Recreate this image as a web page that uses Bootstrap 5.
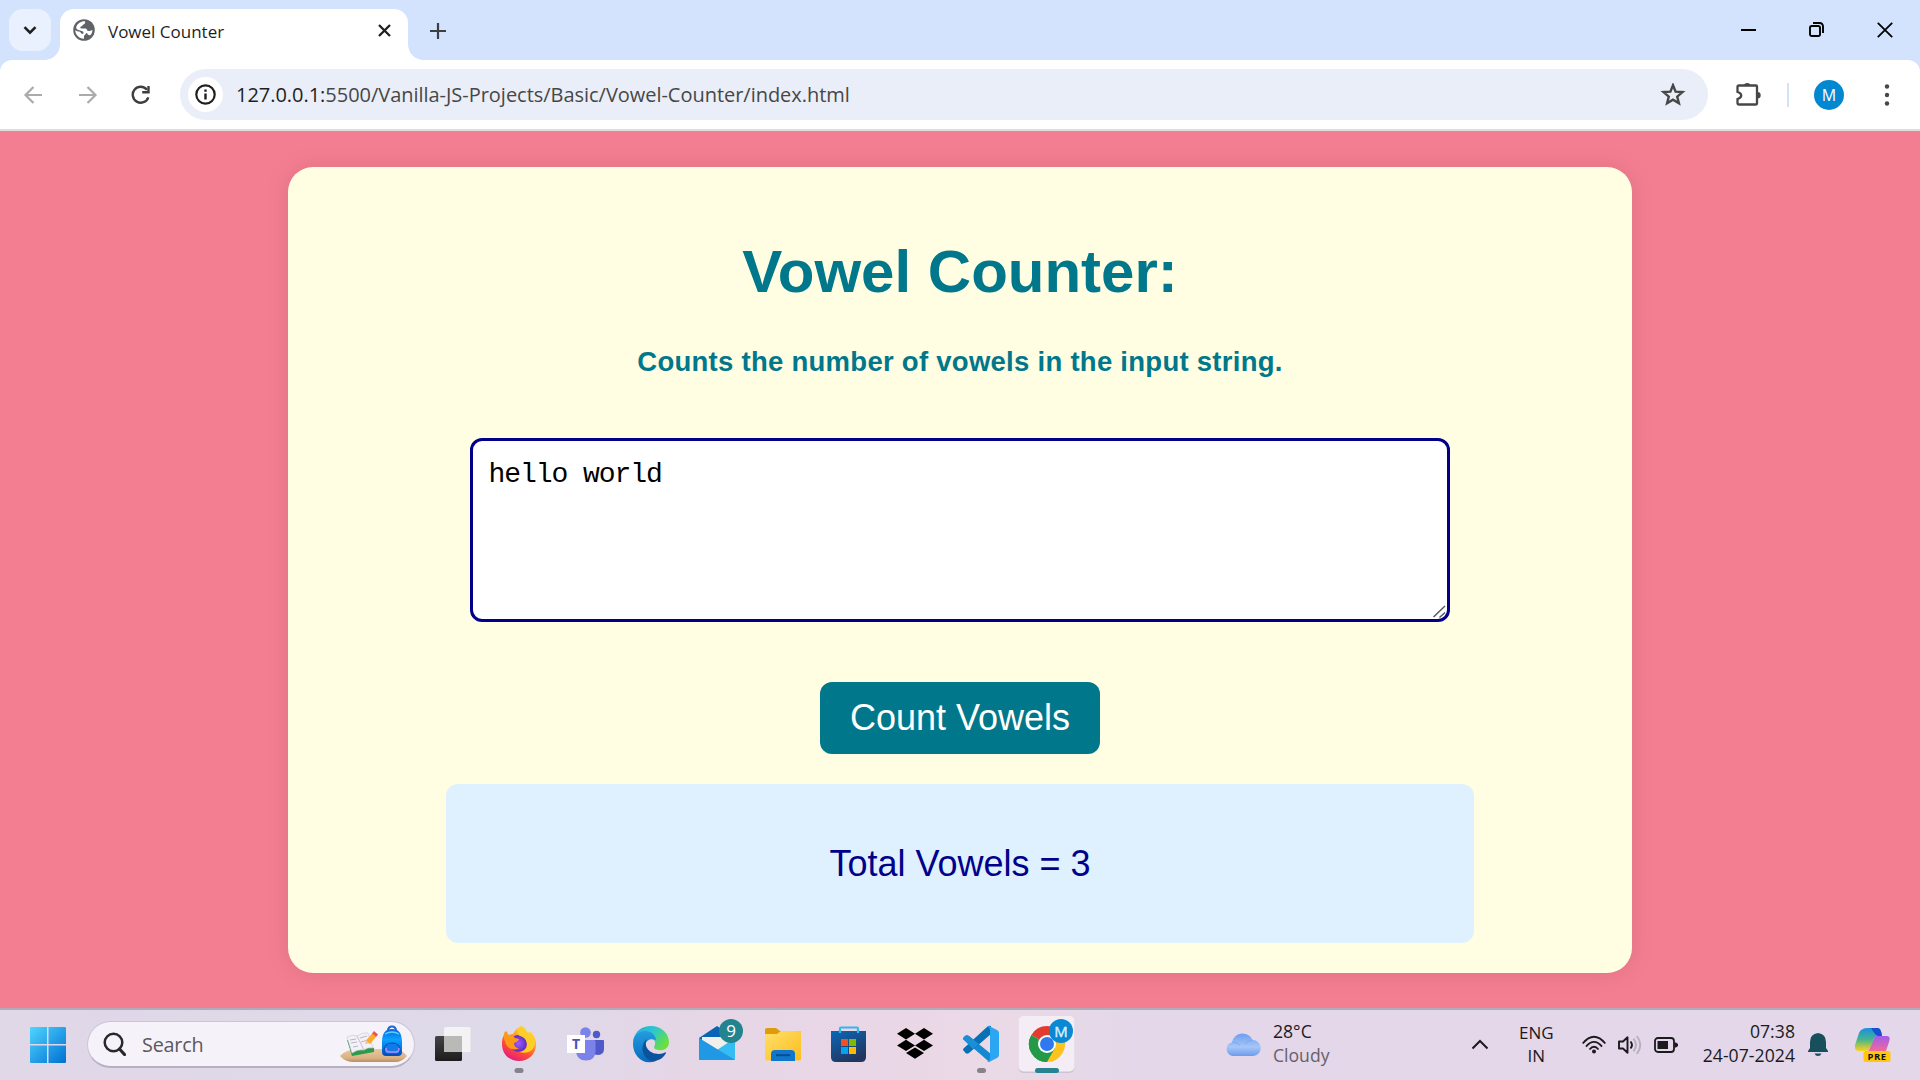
<!DOCTYPE html>
<html lang="en">
<head>
<meta charset="utf-8">
<meta name="viewport" content="width=device-width, initial-scale=1">
<title>Vowel Counter</title>
<link href="https://cdn.jsdelivr.net/npm/bootstrap@5.3.0/dist/css/bootstrap.min.css" rel="stylesheet">
<style>
  body { width: 1920px; height: 1080px; font-family: "Open Sans", "Noto Sans", sans-serif; color: #1f1f1f; }
  svg { display: block; flex: none; }

  /* browser chrome */
  .tabstrip { height: 60px; background: #d3e3fd; padding: 9px 0 0 9px; }
  .tab-search { width: 42px; height: 42px; border-radius: 14px; background: #eaf1fe; }
  .page-tab { width: 348px; height: 51px; margin-left: 9px; border-radius: 14px 14px 0 0; background: #fff; padding: 0 17px 9px 13px; position: relative; }
  .page-tab::before, .page-tab::after { content: ""; position: absolute; bottom: 0; width: 15px; height: 15px; }
  .page-tab::before { left: -15px; background: radial-gradient(circle at 0 0, transparent 14.5px, #fff 15px); }
  .page-tab::after { right: -15px; background: radial-gradient(circle at 100% 0, transparent 14.5px, #fff 15px); }
  .tab-title { font-size: 17px; margin-left: 13px; padding-top: 3px; line-height: 38px; }
  .win-buttons { gap: 53px; padding: 0 27px 10px 0; }
  .toolbar-wrap { height: 69px; background: #d3e3fd; }
  .toolbar { height: 69px; background: #fff; border-radius: 12px 12px 0 0; padding: 0 28px 0 22px; }
  .nav-icons { gap: 30.500px; }
  .omnibox { width: 1528px; height: 51px; margin-left: 29px; border-radius: 26px; background: #eaeef8; padding: 0 22px 0 8px; }
  .site-info { width: 35px; height: 35px; border-radius: 50%; background: #fff; }
  .url { font-size: 20px; letter-spacing: -.03px; margin-left: 13px; color: #474747; }
  .url b { font-weight: 400; color: #1f1f1f; }
  .avatar { width: 30px; height: 30px; border-radius: 50%; background: #0288d1; color: #fff; font-size: 16px; }
  .bar-sep { width: 2px; height: 24px; margin: 0 25px 0 26px; background: #d3e3fd; }
  .kebab { margin-left: 38px; }

  /* page */
  .stage { height: 879px; background: #f47e91; border-top: 2px solid #dedede; padding-top: 36px; font-family: "Liberation Sans", Arial, sans-serif; }
  .counter-panel { width: 1344px; height: 806px; border-radius: 25px; background: #fffee3; box-shadow: 0 0 25px rgba(0,0,0,.1); padding-top: 70px; }
  .counter-title { font-size: 60px; line-height: 69px; font-weight: 700; color: #00778b; }
  .counter-sub { font-size: 27.5px; line-height: 32px; font-weight: 700; color: #00778b; margin-top: 40px; letter-spacing: .27px; }
  .input-wrap { margin-top: 60px; }
  .vowel-input { display: block; width: 980px; height: 184px; border: 3px solid #00008b; border-radius: 12px; padding: 19px 16px 13px 15.500px; font-family: "Liberation Mono", monospace; font-size: 28px; letter-spacing: -1.05px; line-height: 30px; color: #000; resize: none; background: #fff; outline: 0; }
  .grip { position: absolute; right: 4px; bottom: 4px; }
  .count-btn { width: 280px; height: 72px; margin-top: 60px; border-radius: 12px; background: #00778b; color: #fff; font-size: 36px; border: 0; padding: 0; }
  .count-btn:hover { background: #00667a; color: #fff; }
  .result-box { width: 1028px; height: 159px; margin-top: 30px; border-radius: 12px; background: #dff0ff; color: #00008b; font-size: 36px; }

  /* taskbar */
  .taskbar { height: 72px; border-top: 2px solid #b0aab9; background: linear-gradient(90deg, #e0d7e7 0, #dfd9e8 20%, #dddae9 27%, #e5d6e6 35%, #ead7e6 47%, #eadae6 52%, #e3d7e9 59%, #e3d7e9 100%); padding-left: 30px; padding-right: 29px; }
  .search-pill { width: 328px; height: 47px; margin: 0 4px 2px 21px; border: 1.5px solid #cbc5d5; border-bottom: 2px solid #b6b0c1; border-radius: 24px; background: #f5f3f9; padding: 0 6px 0 15px; }
  .search-pill span { font-size: 19.8px; color: #5b5860; margin-left: 16px; padding-top: 2px; letter-spacing: -.2px; }
  .tray-text { font-size: 17.6px; line-height: 24px; color: #1b1a1d; padding-bottom: 4px; }
  .weather { margin-left: 146px; gap: 12px; }
  .dim { color: #65616a; }
  .tray { gap: 12px; }
  .lang { font-size: 17px; line-height: 23px; padding-bottom: 3px; margin: 0 16px 0 18px; }
  .clock { margin-left: 13px; letter-spacing: .05px; }
  .copilot { margin-left: 14px; }
</style>
<script src="https://cdn.jsdelivr.net/npm/bootstrap@5.3.0/dist/js/bootstrap.bundle.min.js"></script>
</head>
<body class="m-0 overflow-hidden d-flex flex-column">

<header>
  <div class="tabstrip d-flex">
    <div class="tab-search d-flex align-items-center justify-content-center">
      <svg width="14" height="9" viewBox="0 0 14 9" fill="none" stroke="#1f1f1f" stroke-width="2.6"><path d="M1.5 1.2 7 6.7l5.500-5.500"/></svg>
    </div>
    <div class="page-tab d-flex align-items-center">
      <svg width="22" height="22" viewBox="0 0 22 22"><circle cx="11" cy="11" r="10.800" fill="#5f6368"/><path d="M12 2.300c.6 1.800-.3 2.700-1.500 3.200-1.200.4-.9 1.800-2.500 2.100-1.200.3-.9 1.700.1 1.900h4.200c1.500.1 1.900 1.100 2 2.200l1.700.4c1.200.2 1.400-1.200 3.500-.7-.2 1.700-1 3.400-2 4.700-1.600.6-2.700-.2-3.200-1.500-.2-.8-1.300-.7-1.600.1-.4 1.300-1.600 1.200-1.700 2.500v2.500C6 19.500 2.300 15.600 2.300 11.200c1.300 1 2.800 1.200 4 1.400 1.700.2 1.400 2.200 2.900 2.300 1.700 0 1.700-1.500.7-2.300-1-.7-2.300-1-3.700-1.300C3.900 11 3 9.500 3.200 8 4.500 4.400 8 2.100 12 2.300z" fill="#fff"/></svg>
      <span class="tab-title flex-grow-1">Vowel Counter</span>
      <svg width="13" height="13" viewBox="0 0 13 13" stroke="#1f1f1f" stroke-width="2.300"><path d="M1 1l11 11M12 1 1 12"/></svg>
    </div>
    <svg class="ms-3 mt-2" width="30" height="30" viewBox="-7 -7 30 30" stroke="#3c4043" stroke-width="2.200"><path d="M7-1v16M-1 7h16"/></svg>
    <div class="win-buttons ms-auto d-flex align-items-center">
      <svg width="15" height="16" stroke="#000" stroke-width="2"><path d="M0 8h15"/></svg>
      <svg width="15" height="15" viewBox="0 0 15 15" fill="none" stroke="#000" stroke-width="1.900"><rect x="1" y="4" width="10" height="10" rx="1.800"/><path d="M4 1h6.500q3.500 0 3.500 3.500V11"/></svg>
      <svg width="16" height="16" viewBox="0 0 16 16" stroke="#000" stroke-width="1.800"><path d="M.8.800l14.400 14.400M15.200.8.800 15.200"/></svg>
    </div>
  </div>
  <div class="toolbar-wrap">
    <div class="toolbar d-flex align-items-center">
      <div class="nav-icons d-flex align-items-center">
        <svg width="22" height="22" viewBox="0 0 22 22" fill="none" stroke="#ababab" stroke-width="2.200"><path d="M20 11H4M11.500 3 3.500 11l8 8"/></svg>
        <svg width="22" height="22" viewBox="1 0 22 22" fill="none" stroke="#ababab" stroke-width="2.200" class="ms-1"><path d="M1 11h16M9.500 3l8 8-8 8"/></svg>
        <svg width="20" height="20" viewBox="0 0 20 20" fill="none" stroke="#3c4043" stroke-width="2.400"><path d="M17.300 12.300A8 8 0 1 1 16 4.700"/><path d="M17.500 1V7.300H11.200" /></svg>
      </div>
      <div class="omnibox d-flex align-items-center">
        <div class="site-info d-flex align-items-center justify-content-center">
          <svg width="21" height="21" viewBox="0 0 21 21"><circle cx="10.500" cy="10.500" r="9.200" fill="none" stroke="#1f1f1f" stroke-width="2.200"/><path d="M9.300 9.500h2.400v6H9.300zM9.300 5.500h2.400v2.300H9.300z" fill="#1f1f1f"/></svg>
        </div>
        <span class="url flex-grow-1"><b>127.0.0.1:</b>5500/Vanilla-JS-Projects/Basic/Vowel-Counter/index.html</span>
        <svg width="26" height="24" viewBox="0 1 26 24" fill="none" stroke="#474747" stroke-width="2.400"><path d="M13 3.200l2.600 6.400 6.900.5-5.300 4.500 1.700 6.700L13 17.700l-5.900 3.600 1.700-6.700-5.300-4.500 6.900-.5z"/></svg>
      </div>
      <svg class="ms-auto" width="25" height="24" viewBox="0 1 25 24"><path d="M3 3.500h17q1 0 1 1v17q0 1-1 1H3q-1.500 0-1.500-1.500v-4c5-1.500 5-5.500 0-7v-5q0-1.500 1.500-1.500z" fill="none" stroke="#474747" stroke-width="2.300"/><path d="M8 3.500a3.200 2.500 0 0 1 6.400 0zM21.500 10a3.200 3.200 0 0 1 0 6.400z" fill="#474747"/></svg>
      <div class="bar-sep"></div>
      <div class="avatar d-flex align-items-center justify-content-center">M</div>
      <svg class="kebab" width="10" height="24" viewBox="0 0 10 24" fill="#474747"><circle cx="5" cy="3.500" r="2.200"/><circle cx="5" cy="12" r="2.200"/><circle cx="5" cy="20.500" r="2.200"/></svg>
    </div>
  </div>
</header>

<main class="stage">
  <section class="counter-panel mx-auto d-flex flex-column align-items-center">
    <h1 class="counter-title mb-0">Vowel Counter:</h1>
    <p class="counter-sub mb-0">Counts the number of vowels in the input string.</p>
    <div class="input-wrap position-relative">
      <textarea class="vowel-input" spellcheck="false">hello world</textarea>
      <svg class="grip" width="14" height="14" viewBox="0 0 14 14" stroke="#5a5a5a" stroke-width="1.500"><path d="M1.500 13 13 2M7.500 13.500 13 8.500"/></svg>
    </div>
    <button type="button" class="btn count-btn">Count Vowels</button>
    <div class="result-box d-flex align-items-center justify-content-center">Total Vowels = 3</div>
  </section>
</main>

<footer class="taskbar d-flex align-items-center">
  <svg width="36" height="36" viewBox="0 0 35 35"><defs><linearGradient id="win" x1="0" y1="0" x2="1" y2="1" ><stop offset="0" stop-color="#4fd5ff"/><stop offset="1" stop-color="#0070d3"/></linearGradient></defs><path d="M1 0h15.500v16.500H0V1q0-1 1-1zM18 0h16q1 0 1 1v15.500H18zM0 18h16.500v17H1q-1 0-1-1zM18 18h17v16q0 1-1 1H18z" fill="url(#win)"/></svg>

  <div class="search-pill d-flex align-items-center">
    <svg width="23" height="24" viewBox="0 0 23 24" fill="none" stroke="#2a282b" stroke-width="2.500"><circle cx="10.500" cy="10.500" r="8.800"/><path d="M16.500 17 21.500 22.500" stroke-width="3.200" stroke-linecap="round"/></svg>
    <span class="flex-grow-1">Search</span>
    <svg width="68" height="40" viewBox="0 0 68 40">
      <defs><linearGradient id="sand" x2="0" y2="1"><stop stop-color="#e8c79c"/><stop offset=".7" stop-color="#d9b283"/><stop offset="1" stop-color="#b98b60"/></linearGradient>
      <linearGradient id="pack" x2="0" y2="1"><stop stop-color="#0c63dc"/><stop offset=".4" stop-color="#0aa2ff"/><stop offset="1" stop-color="#0549bd"/></linearGradient></defs>
      <path d="M0 32q6-7 20-7h30q14 1 17 7-5 6-12 6H14Q5 38 0 32z" fill="url(#sand)"/>
      <path d="M7 16l5 16 22-4 0-4z" fill="#2c9a4b"/><path d="M7 13q6-3 10-1 6-4 11-3l5 15q-5-1-9 2-6-1-12 3z" fill="#f3f1f7" stroke="#c9c5d3" stroke-width=".6"/><path d="M17 12l7 14" stroke="#c4bfd0" stroke-width="1"/><path d="M10 16l6-1m-5 4 6-1m-4 5 5-1m2-8 7-2m-6 6 7-2" stroke="#b3afc2" stroke-width=".9"/>
      <path d="M25 20l2-5 5 4z" fill="#eec48a"/><path d="M26.500 16 32 9.500l4 3.500-6 7z" fill="#f9ac2e"/><path d="M32 9.500l2-2.500 4 3.500-2 2.500z" fill="#ef5351"/>
      <path d="M48 7q0-4.500 4-4.500T56 7" fill="none" stroke="#1c67d8" stroke-width="2"/><path d="M42 18Q42 5 52 5t10 13v10q0 4-4 4H46q-4 0-4-4z" fill="url(#pack)"/><path d="M45 10q7-4 14 0" fill="none" stroke="#5ad5ff" stroke-width="1.300"/><path d="M44 27q0-8 8-8t8 8q0 3-3 3H47q-3 0-3-3z" fill="#127be9" stroke="#054ab9"/><path d="M46 24q0 4 3 4h7q3 0 3-4" fill="none" stroke="#b28cff" stroke-width="1.500"/>
    </svg>
  </div>

  <!-- pinned and running apps, one 66px slot each -->
  <div class="d-flex" id="apps">
    <svg width="66" height="70" viewBox="0 0 66 70"><defs><linearGradient id="tv" x2="0" y2="1"><stop stop-color="#444"/><stop offset="1" stop-color="#1c1c1c"/></linearGradient></defs><rect x="16" y="26" width="27" height="25" rx="1.500" fill="url(#tv)"/><rect x="25" y="17" width="26.500" height="25" rx="1.500" fill="#f3f3f4"/><path d="M25 26h18v16H25z" fill="#b9b9b8"/></svg>

    <svg width="66" height="70" viewBox="0 0 66 70"><defs><linearGradient id="fx" x1=".8" y1="0" x2=".25" y2="1"><stop stop-color="#fff44f"/><stop offset=".35" stop-color="#ffa22a"/><stop offset=".65" stop-color="#ff5030"/><stop offset="1" stop-color="#e31587"/></linearGradient><radialGradient id="fxp"><stop stop-color="#a05bff"/><stop offset="1" stop-color="#5b2bc2"/></radialGradient></defs><path d="M36 16q4 3 5 8 3 0 4-3c4 4 6 8 6 13 0 10-7 17-17 17S17 44 17 34c0-6 2-10 5-13l1 4 5-1q3-6 8-8z" fill="url(#fx)"/><circle cx="33.500" cy="33.500" r="8.500" fill="url(#fxp)"/><path d="M20 21l3 4c4-1 5 1 7 3l4 1c-1 3-3 3-5 4 0 3 2 5 5 5-6 4-13 0-14-7-2-4-1-7 0-10z" fill="#ff9a16"/><path d="M36 16c-4 4-4 9-1 10 4 1 7 4 7 9 0 4-4 7-8 7 10 3 17-3 16-11-1-7-5-8-8-9q-2-5-6-6z" fill="#ffcd28"/><rect x="29.500" y="58" width="9" height="5" rx="2.500" fill="#87818c"/></svg>

    <svg width="66" height="70" viewBox="0 0 66 70"><circle cx="34.500" cy="22.500" r="5.300" fill="#7b83eb"/><circle cx="45.500" cy="24.500" r="3.700" fill="#5059c9"/><path d="M43 30h9q1 0 1 1v8q0 6-7 6-3 0-6-3z" fill="#5059c9"/><path d="M25 30h18q1.500 0 1.500 1.500V41q0 9.500-9.500 9.500T25 41z" fill="#7b83eb"/><rect x="16" y="25" width="18" height="18" fill="#fff"/><text x="25" y="39" font-size="14" font-weight="700" fill="#4b53bc" text-anchor="middle">T</text></svg>

    <svg width="66" height="70" viewBox="0 0 66 70"><defs><linearGradient id="e1" x2="1" y2=".6"><stop stop-color="#1fa9ef"/><stop offset=".55" stop-color="#31c9c3"/><stop offset="1" stop-color="#6be03d"/></linearGradient><linearGradient id="e2" x2="0" y2="1"><stop stop-color="#249de0"/><stop offset="1" stop-color="#0869bd"/></linearGradient></defs><path d="M16 31C18 21 25 16 34 16c10 0 18 7 18 16 0 6-5 9-10 8-3 0-5-1-5-3 5-8-6-14-21-6z" fill="url(#e1)"/><path d="M16 34c0-9 6-13 12-13 7 0 11 5 11 9-6-2-10 0-11 6-1 8 4 14 11 15-13 5-23-5-23-17z" fill="url(#e2)"/><path d="M30 29c-7 5-6 18 4 22 8 1 13-4 15-8 0-1-1-1-2 0-6 2-13 1-17-5-2-4-1-7 0-9z" fill="#0c539d"/></svg>

    <svg width="66" height="70" viewBox="0 0 66 70"><path d="M16 28 34 16l18 12v8H16z" fill="#0b63b6"/><path d="M19 27h30v12L34 44 19 36z" fill="#f1efec"/><path d="M16 28l18 12L52 28v21q0 1-1 1H17q-1 0-1-1z" fill="#35bdf3"/><path d="M16 28l36 22H17q-1 0-1-1z" fill="#2098e4"/><circle cx="48" cy="21" r="12" fill="#23838f"/><text x="48" y="27" font-size="17" fill="#fff" text-anchor="middle">9</text></svg>

    <svg width="66" height="70" viewBox="0 0 66 70"><defs><linearGradient id="fo" x2="1" y2="1"><stop stop-color="#ffdf69"/><stop offset="1" stop-color="#fcbd1f"/></linearGradient></defs><path d="M16 20q0-2 2-2h9l4 3h19q2 0 2 2v8H16z" fill="#dc9c0b"/><path d="M16 24h12l4-3h18q2 0 2 2v26q0 1.500-1.500 1.500h-33Q16 50.500 16 49z" fill="url(#fo)"/><path d="M22 51v-7q0-4 4-4h16q4 0 4 4v7z" fill="#0f77cb"/><path d="M27 45.200h14" stroke="#064b91" stroke-width="2"/></svg>

    <svg width="66" height="70" viewBox="0 0 66 70"><defs><linearGradient id="st" x2=".5" y2="1"><stop stop-color="#0c67b8"/><stop offset="1" stop-color="#21365f"/></linearGradient></defs><path d="M25 24v-5.500q0-1 1-1h16q1 0 1 1V24" fill="none" stroke="#35b6ee" stroke-width="2.200"/><path d="M16 21h35v26q0 5-5 5H21q-5 0-5-5z" fill="url(#st)"/><path d="M25 23v-3m18 3v-3" stroke="#35b6ee" stroke-width="2.200"/><path d="M26 29h7v7h-7z" fill="#f25022"/><path d="M34 29h7v7h-7z" fill="#7fba00"/><path d="M26 37h7v7h-7z" fill="#00a4ef"/><path d="M34 37h7v7h-7z" fill="#ffb900"/></svg>

    <svg width="66" height="70" viewBox="0 0 66 70"><path d="M25 18l9 5.700-9 5.700-9-5.700zM43 18l9 5.700-9 5.700-9-5.700zM25 29.700l9 5.700-9 5.700-9-5.700zM43 29.700l9 5.700-9 5.700-9-5.700zM34 37.500l9 5.600-9 5.600-9-5.600z"/></svg>

    <svg width="66" height="70" viewBox="0 0 66 70"><path d="M17 27q2-3 5-1l22 18v7q-2 1-4-1L17 30q-2-1 0-3z" fill="#1488d0"/><path d="M17 41q-2-1 0-3l23-21q2-2 4-1v8L22 43q-3 2-5-2z" fill="#0870b5"/><path d="M17 27q2-3 5-1l10 8-6 5-9-9q-2-1 0-3z" fill="#1a8fd5"/><path d="M42 16l8 4q2 1 2 3v22q0 2-2 3l-8 4q-1 0-2-1 3 0 3-3V20q0-3-3-3 1-1 2-1z" fill="#2aa6f2"/><rect x="30" y="58" width="9" height="5" rx="2.500" fill="#87818c"/></svg>

    <svg width="66" height="70" viewBox="0 0 66 70"><rect x="5.500" y="7" width="56" height="56" rx="5" fill="#cdc3d2"/><rect x="5.500" y="6" width="56" height="55.500" rx="5" fill="#f4edf5"/><path d="M34 34 18.400 25A18 18 0 0 1 49.600 25z" fill="#e33b2e"/><path d="M34 34 18.400 25A18 18 0 0 0 34 52z" fill="#249a49"/><path d="M34 34h-8L34 52A18 18 0 0 0 49.600 25H34z" fill="#fcc31e"/><path d="M24 31 18.400 25A18 18 0 0 0 34 52l8-14-8 4z" fill="#249a49"/><circle cx="34" cy="34" r="9" fill="#fff"/><circle cx="34" cy="34" r="7" fill="#2e79ee"/><circle cx="48" cy="21" r="12" fill="#0989d3"/><text x="48" y="26.500" font-size="15" fill="#d9f0ff" stroke="#d9f0ff" stroke-width=".4" text-anchor="middle">M</text><rect x="22" y="58" width="24" height="5" rx="2.500" fill="#27838f"/></svg>
  </div>

  <div class="weather d-flex align-items-center">
    <svg width="36" height="24" viewBox="0 0 36 24"><defs><linearGradient id="cl" x2="0" y2="1"><stop stop-color="#6d9ef0"/><stop offset=".6" stop-color="#a5c7f8"/><stop offset="1" stop-color="#6d9beb"/></linearGradient></defs><path d="M8 23a7 7 0 0 1-1-13.800Q9 1 17 0.500 25 .5 27.500 7A8 8 0 0 1 28 23z" fill="url(#cl)"/><path d="M7 9.200q4-.5 8 3M20 11q3-4 8-4" fill="none" stroke="#7daaf1" stroke-width="1"/></svg>
    <div class="tray-text">28°C<br><span class="dim">Cloudy</span></div>
  </div>

  <div class="tray ms-auto d-flex align-items-center">
    <svg width="18" height="12" viewBox="0 0 18 12" fill="none" stroke="#1b1a1d" stroke-width="2"><path d="M1.500 9.500 9 2l7.500 7.500"/></svg>
    <div class="tray-text lang text-center">ENG<br>IN</div>
    <svg width="24" height="20" viewBox="0 0 24 20" fill="none" stroke="#1b1a1d" stroke-width="1.800"><path d="M.7 8.500q11.300-13.500 22.600 0M4 11.700q8-9.500 16 0M7.500 14.500q4.500-5.500 9 0"/><circle cx="12" cy="16.500" r="2" fill="#1b1a1d" stroke="none"/></svg>
    <svg width="24" height="20" viewBox="0 0 24 20" fill="none" stroke="#1b1a1d" stroke-width="1.900"><path d="M1 6.500h4L9.500 2.300v15.400L5 13.500H1z" stroke-linejoin="round"/><path d="M12.500 6.500q3 3.500 0 7"/><path d="M15.500 3.700q5 6.300 0 12.600M18.800 1q7 9 0 18" stroke="#b7afbc"/></svg>
    <svg width="24" height="16" viewBox="0 0 24 16"><rect x="1" y="1" width="19" height="14" rx="3" fill="none" stroke="#1b1a1d" stroke-width="1.800"/><path d="M3.500 4h10.500v8H3.500zM20.500 5.500H22l2 1.500v2l-2 1.500h-1.500z" fill="#1b1a1d"/></svg>
    <div class="tray-text clock text-end">07:38<br>24-07-2024</div>
    <svg width="22" height="24" viewBox="0 0 22 24" fill="#184f5d"><path d="M11 0q8 1 8 9v6l2 3v1H1v-1l2-3V9q0-8 8-9zM7.500 20.500h7q-1 2.500-3.500 2.500t-3.500-2.500z"/></svg>
    <svg class="copilot" width="36" height="36" viewBox="0 0 36 36"><defs><linearGradient id="c1" x2="0" y2="1"><stop stop-color="#1b8ee5"/><stop offset=".5" stop-color="#44b68c"/><stop offset="1" stop-color="#ffd21e"/></linearGradient><linearGradient id="c2" x2="0" y2="1"><stop stop-color="#a45af0"/><stop offset="1" stop-color="#ff6f82"/></linearGradient></defs><path d="M20 9h12q4 0 2 6l-3 9q-1 3-5 3H12z" fill="url(#c2)"/><path d="M13 1h9q4 0 5 8h-4q-4 0-5 5l-3 7q-1 3-4 3H3q-4 0-3-6l4-12q2-5 9-5z" fill="url(#c1)"/><path d="M16 1h7q3 0 4 8h-4q-3-1-7-8z" fill="#1950cf"/><rect x="8.500" y="24" width="27" height="11" rx="2.500" fill="#ffc80a"/><text x="22" y="33" font-size="9.500" font-weight="700" fill="#111" text-anchor="middle" letter-spacing=".4">PRE</text></svg>
  </div>
</footer>
</body>
</html>
